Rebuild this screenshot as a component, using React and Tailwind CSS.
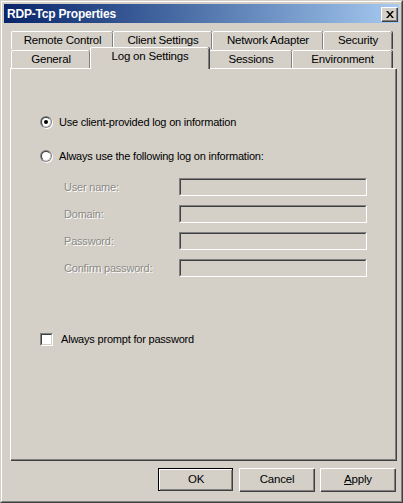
import React from 'react'

const font = { fontFamily: '"Liberation Sans", Arial, sans-serif' }

function Tab({ label, width, selected }) {
  return (
    <div
      className={
        'flex items-center justify-center border-l border-t border-white shadow-[inset_-1px_0_0_#808080,1px_0_0_#404040] rounded-t-[2px] bg-[#d4d0c8] text-[11.5px] tracking-[-0.2px] text-black ' +
        (selected ? 'h-[22px] -mt-[2px] -mb-[1px] z-10 relative pb-[4px]' : 'h-[18px]')
      }
      style={{ width }}
    >
      {label}
    </div>
  )
}

function Radio({ checked }) {
  return (
    <div className="w-[12px] h-[12px] rounded-full bg-[#808080] p-[1px] shadow-[1px_1px_0_#fff]">
      <div className="w-full h-full rounded-full bg-white border border-[#404040] border-b-[#d4d0c8] border-r-[#d4d0c8] flex items-center justify-center">
        {checked ? <div className="w-[4px] h-[4px] rounded-full bg-black" /> : null}
      </div>
    </div>
  )
}

function Field({ label }) {
  return (
    <div className="flex items-center h-[18px]">
      <div className="w-[115px] text-[#8c8a85] [text-shadow:1px_1px_0_#fff]">{label}</div>
      <div className="w-[188px] h-[18px] border-l border-t border-[#808080] border-r border-b border-r-white border-b-white">
        <div className="w-full h-full border-l border-t border-[#404040] border-r border-b border-r-[#d4d0c8] border-b-[#d4d0c8] bg-[#d4d0c8]" />
      </div>
    </div>
  )
}

function Button({ children, isDefault }) {
  return (
    <div className={'w-[75px] h-[23px] ' + (isDefault ? 'border border-black' : '')}>
      <div className="w-full h-full border-l border-t border-white shadow-[inset_-1px_-1px_0_#808080,1px_1px_0_#404040] flex items-center justify-center text-[11.5px] tracking-[-0.2px] text-black bg-[#d4d0c8]">
        {children}
      </div>
    </div>
  )
}

export default function App() {
  return (
    <div
      className="w-[403px] h-[503px] bg-[#d4d0c8] border-l border-t border-[#d4d0c8] border-r border-b border-r-[#404040] border-b-[#404040] overflow-hidden"
      style={font}
    >
      <div className="w-full h-full border-l border-t border-white border-r border-b border-r-[#808080] border-b-[#808080] flex flex-col p-[1px]">
        <div className="mx-[1px] mt-[1px] h-[19px] bg-gradient-to-r from-[#0a246a] to-[#a6caf0] flex items-center justify-between pl-[3px] pr-[2px]">
          <span className="text-white font-bold text-[12px] tracking-[-0.2px]">RDP-Tcp Properties</span>
          <div className="w-[16px] h-[14px] bg-[#d4d0c8] border-l border-t border-white shadow-[inset_-1px_-1px_0_#808080,1px_1px_0_#404040] flex items-center justify-center">
            <svg width="8" height="7" viewBox="0 0 8 7">
              <path d="M0 0h2l2 2.5L6 0h2L5 3.5 8 7H6L4 4.5 2 7H0l3-3.5z" fill="#000" />
            </svg>
          </div>
        </div>

        <div className="mt-[9px] ml-[8px] flex flex-col">
          <div className="flex h-[17px] items-end">
            <Tab label="Remote Control" width={102} />
            <Tab label="Client Settings" width={99} />
            <Tab label="Network Adapter" width={111} />
            <Tab label="Security" width={69} />
          </div>
          <div className="flex h-[19px] items-end">
            <Tab label="General" width={79} />
            <Tab label="Log on Settings" width={119} selected />
            <Tab label="Sessions" width={83} />
            <Tab label="Environment" width={100} />
          </div>
        </div>

        <div className="ml-[7px] w-[386px] h-[392px] border-l border-t border-white shadow-[inset_-1px_-1px_0_#808080,1px_1px_0_#404040] pl-[29px] pt-[45px] text-[11px] tracking-[-0.2px] text-black">
          <div className="flex items-center h-[16px] gap-[7px]">
            <Radio checked />
            <span>Use client-provided log on information</span>
          </div>
          <div className="flex items-center h-[16px] gap-[7px] mt-[18px]">
            <Radio />
            <span>Always use the following log on information:</span>
          </div>
          <div className="ml-[24px] mt-[14px] flex flex-col gap-[9px]">
            <Field label="User name:" />
            <Field label="Domain:" />
            <Field label="Password:" />
            <Field label="Confirm password:" />
          </div>
          <div className="flex items-center h-[13px] gap-[8px] mt-[56px]">
            <div className="w-[13px] h-[13px] border-l border-t border-[#808080] border-r border-b border-r-white border-b-white">
              <div className="w-full h-full border-l border-t border-[#404040] border-r border-b border-r-[#d4d0c8] border-b-[#d4d0c8] bg-white" />
            </div>
            <span>Always prompt for password</span>
          </div>
        </div>

        <div className="flex justify-end gap-[6px] mt-[8px] pr-[5px]">
          <Button isDefault>OK</Button>
          <Button>Cancel</Button>
          <Button>
            <span><span className="underline">A</span>pply</span>
          </Button>
        </div>
      </div>
    </div>
  )
}
